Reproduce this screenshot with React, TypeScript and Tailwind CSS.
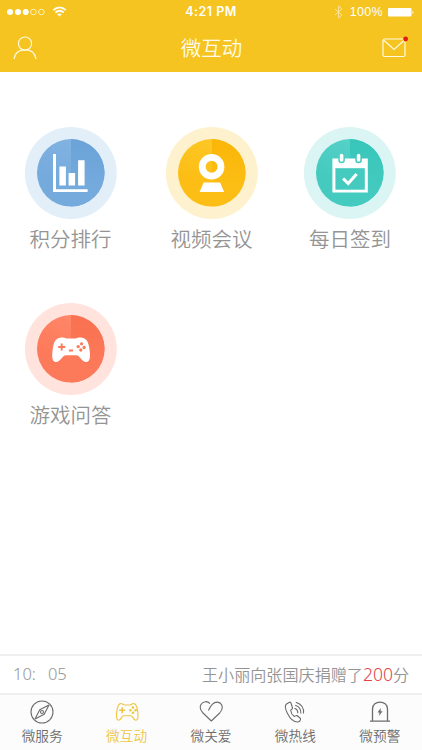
import React from "react";

function StatusBar() {
  return (
    <div className="grid h-6 grid-cols-[1fr_auto_1fr] items-center pl-[7px] pr-[7px] font-['Liberation_Sans',Arial,sans-serif] text-white">
      <div className="flex items-center">
        <svg width="61" height="12" viewBox="0 0 61 12" fill="#fff">
          <circle cx="3" cy="6" r="3" />
          <circle cx="11" cy="6" r="3" />
          <circle cx="18.7" cy="6" r="3" />
          <circle cx="26.4" cy="6" r="2.8" fill="none" stroke="#fff" strokeWidth=".7" />
          <circle cx="34.4" cy="6" r="2.8" fill="none" stroke="#fff" strokeWidth=".7" />
          <path d="M46.3 4.2Q52.5-1.5 58.8 4.2M48.4 6.5Q52.5 3 56.7 6.5" fill="none" stroke="#fff" strokeWidth="1.7" />
          <path d="M50.2 8.2Q52.5 6.7 54.8 8.2L52.5 10.5Z" />
        </svg>
      </div>
      <span className="font-['Inter',sans-serif] text-[12.5px] font-semibold leading-6 tracking-[0.5px]">4:21 PM</span>
      <div className="flex items-center justify-end">
        <svg width="10" height="14" viewBox="0 0 10 14" fill="none" stroke="#fff" strokeWidth="1" opacity=".55">
          <path d="M1 4l7 6-3.5 3V1L8 4l-7 6" />
        </svg>
        <span className="ml-[6px] text-[12.5px] leading-6 tracking-[0.3px]">100%</span>
        <svg className="ml-[5px]" width="27" height="9" viewBox="0 0 27 9" fill="#fff">
          <rect width="23.5" height="8.500" rx="1" />
          <path d="M24.5 2.8Q26.4 4.5 24.5 6.2Z" />
        </svg>
      </div>
    </div>
  );
}

function Header() {
  return (
    <header className="h-[72px] bg-[#f5c421]">
      <StatusBar />
      <div className="flex h-12 items-center justify-between pl-3 pr-[13px]">
        <svg width="26" height="26" viewBox="0 0 26 26" fill="none" stroke="#fff9df" strokeWidth="1.2">
          <circle cx="13" cy="8.6" r="6.6" />
          <path d="M2 24C2.8 18 7 14.8 13 14.8S23.2 18 24 24" />
        </svg>
        <h1 className="-mt-[2px] pl-[4px] text-[20.5px] font-[350] leading-[48px] text-[#fffbe8]">微互动</h1>
        <svg width="28" height="26" viewBox="0 0 28 26" fill="none" stroke="#fff9df" strokeWidth="1.2">
          <rect x="2" y="4" width="22" height="17.5" rx="1.5" />
          <path d="M2.5 5l10.5 9.5L23.5 5" />
          <circle cx="24.6" cy="4" r="2.4" fill="#e11b12" stroke="none" />
        </svg>
      </div>
    </header>
  );
}

type Tile = { id: string; label: string; ring: string; light: string; base: string; deep: string; glyph: React.ReactNode };

const tiles: Tile[] = [
  {
    id: "rank",
    label: "积分排行",
    ring: "#e2eff9",
    light: "#82b3e1",
    base: "#75aadd",
    deep: "#6ba3d8",
    glyph: (
      <g fill="#fff">
        <path d="M28.4 27h3v35.2H63v2.8H28.4Z" />
        <path d="M34.8 39.5h6.5v19h-6.5ZM44 46h6.5v12.5H44ZM53.5 33.3H60v25.2h-6.5Z" />
      </g>
    ),
  },
  {
    id: "video",
    label: "视频会议",
    ring: "#fef1cd",
    light: "#fdc726",
    base: "#fcbe15",
    deep: "#fab608",
    glyph: (
      <g>
        <circle cx="46" cy="39.8" r="9.4" fill="none" stroke="#fff" strokeWidth="6.8" />
        <path d="M38 55.6H54.5L58.5 65H34Z" fill="#fff" />
      </g>
    ),
  },
  {
    id: "sign",
    label: "每日签到",
    ring: "#daf5f3",
    light: "#56d1c7",
    base: "#44cabf",
    deep: "#37c6ba",
    glyph: (
      <g>
        <path d="M28.8 31.5H34.7V33a3.3 3.3 0 0 0 6.6 0V31.5H51.7V33a3.3 3.3 0 0 0 6.6 0V31.5H64.2V65.5H28.8Z" fill="#fff" />
        <path d="M31.8 41.2H61.2V62.7H31.8Z" fill="#44cabf" />
        <path d="M38 28.5V33M55 28.5V33" stroke="#fff" strokeWidth="3.6" strokeLinecap="round" />
        <path d="M39.5 51.5L44.6 56.5L53 47" fill="none" stroke="#fff" strokeWidth="3" />
      </g>
    ),
  },
  {
    id: "game",
    label: "游戏问答",
    ring: "#ffe3dc",
    light: "#ff8768",
    base: "#fc7a5a",
    deep: "#f97150",
    glyph: (
      <g>
        <path d="M37 34.5C40 34 41 35.5 43 35.5H50C52 35.5 53 34 56 34.5C61 34.5 63.5 38 64.5 44C65.5 50 66.7 58.5 62 59.1C57.5 59.6 55.5 52.3 51.5 52.3H41.5C37.5 52.3 35.5 59.6 31 59.1C26.3 58.5 27.5 50 28.5 44C29.5 38 32 34.5 37 34.5Z" fill="#fff" />
        <path d="M33.6 44H40.6M37.1 40.5V47.5M44.3 47.5H48.5" stroke="#fc7959" strokeWidth="1.9" />
        <g fill="#fc7959">
          <circle cx="57" cy="40.8" r="1.65" />
          <circle cx="53.6" cy="43.6" r="1.65" />
          <circle cx="59.5" cy="44.5" r="1.65" />
          <circle cx="56.2" cy="47" r="1.65" />
        </g>
      </g>
    ),
  },
];

function TileButton({ tile }: { tile: Tile }) {
  return (
    <button className="flex h-[176px] flex-col items-center">
      <svg className="shrink-0" width="92" height="92" viewBox="0 0 92 92">
        <defs>
          <linearGradient id={`${tile.id}-left`} gradientUnits="userSpaceOnUse" x1="18" y1="70" x2="46" y2="12">
            <stop offset=".3" stopColor={tile.base} />
            <stop offset="1" stopColor={tile.light} />
          </linearGradient>
          <linearGradient id={`${tile.id}-right`} x1="0" y1="0" x2="0" y2="1">
            <stop offset="0" stopColor={tile.deep} />
            <stop offset=".75" stopColor={tile.base} />
          </linearGradient>
        </defs>
        <circle cx="45.800" cy="46" r="46" fill={tile.ring} />
        <circle cx="45.700" cy="45.800" r="33.700" fill={`url(#${tile.id}-left)`} />
        <path d="M46 12.100A33.700 33.700 0 0 1 46 79.500Z" fill={`url(#${tile.id}-right)`} />
        <g transform="translate(-.4 0)">{tile.glyph}</g>
      </svg>
      <span className="mt-1 whitespace-nowrap text-[20.5px] font-[350] leading-[30px] text-[#949494]">{tile.label}</span>
    </button>
  );
}

const tabs = [
  {
    label: "微服务",
    icon: (
      <>
        <circle cx="12" cy="12" r="11" />
        <path d="M19 5L14.2 14.2L5 19L9.8 9.8Z" />
        <circle cx="12" cy="12" r="1.5" />
      </>
    ),
  },
  {
    label: "微互动",
    icon: (
      <>
        <path d="M5.5 3.6C7.5 3.2 8 5 9.5 5H15C16.5 5 17 3.2 19 3.6C22 4 22.5 9 22.9 13C23.2 17 23 20.3 20.8 20.3C18.3 20.3 18 15.8 16 15.8H8.5C6.5 15.8 6.2 20.3 3.7 20.3C1.5 20.3 1.3 17 1.6 13C2 9 2.5 4 5.5 3.6Z" />
        <path d="M4.2 10.2H10.2M7.2 7.2V13.2" strokeWidth="1.6" />
        <g fill="currentColor" stroke="none">
          <circle cx="18" cy="7.6" r="1.3" />
          <circle cx="15.4" cy="10.2" r="1.3" />
          <circle cx="20.6" cy="10.2" r="1.3" />
          <circle cx="18" cy="12.8" r="1.3" />
        </g>
      </>
    ),
  },
  {
    label: "微关爱",
    icon: <path d="M11 3.6C8.500 .8 4 1 2 4.5C.2 8 2 11 4 13L12.300 21L20.700 13C23 10.500 24.200 8 22.600 4.800C20.800 1.500 16.500 1.200 13.500 4.200C11.800 6 10.500 8 9.500 10.500" />,
  },
  {
    label: "微热线",
    icon: (
      <>
        <path d="M6.5 2.2L3.5 4C1.5 5.5 2.2 9 4.5 13.5C7 18.5 11 22 14.5 22C16 22 18 20.5 17.5 18.5L14 15.5C13 15 12 16.8 11 16.3C9.5 15.3 8 12.5 7.7 10.5C7.6 9.3 9.7 9.5 9.5 8L8 3C7.7 2.2 7 2 6.5 2.2Z" />
        <path d="M11.5 8.3Q15 9.5 14.8 13.3M12.2 5.2Q18.2 7 17.8 13.5M12.8 2.2Q21.5 5 20.5 13.5" />
      </>
    ),
  },
  {
    label: "微预警",
    icon: (
      <>
        <path d="M4.500 20.700V9C4.500-.2 19.500-.2 19.500 9V20.700M2 21.200H22" strokeWidth="1.300" />
        <path d="M12.700 8L9.500 12.500H11.500L11 16L14.600 11.300H12.600Z" fill="currentColor" stroke="none" />
      </>
    ),
  },
];

export default function App() {
  return (
    <div className="flex h-[750px] w-[422px] flex-col overflow-hidden bg-white font-['Noto_Sans_CJK_SC',sans-serif]">
      <Header />
      <main className="grid flex-1 grid-cols-[141px_141px_136px] content-start pt-[55px]">
        {tiles.map((tile) => (
          <TileButton key={tile.label} tile={tile} />
        ))}
      </main>
      <section className="flex h-[41px] items-center justify-between border-y-2 border-[#efefef] pl-[13px] pr-[13px] font-[350] text-[#949494]">
        <span className="font-['Noto_Sans','Noto_Sans_CJK_SC',sans-serif] text-[16.5px]">10:<span className="ml-[12px]">05</span></span>
        <p className="text-[16.1px]">王小丽向张国庆捐赠了<span className="font-['Noto_Sans',sans-serif] text-[17.5px] text-[#e34244]">200</span>分</p>
      </section>
      <nav className="grid h-[55px] grid-cols-5 bg-[#fcfcfc]">
        {tabs.map((tab, i) => (
          <button key={tab.label} className={`flex flex-col items-center pt-[5px] ${i === 1 ? "text-[#edc643]" : "text-[#6c6c6c]"}`}>
            <svg width="24" height="24" viewBox="0 0 24 24" fill="none" stroke="currentColor" strokeWidth="1.1" strokeLinejoin="round">{tab.icon}</svg>
            <span className="-mt-px text-[13.7px] font-[350] leading-[24px]">{tab.label}</span>
          </button>
        ))}
      </nav>
    </div>
  );
}
